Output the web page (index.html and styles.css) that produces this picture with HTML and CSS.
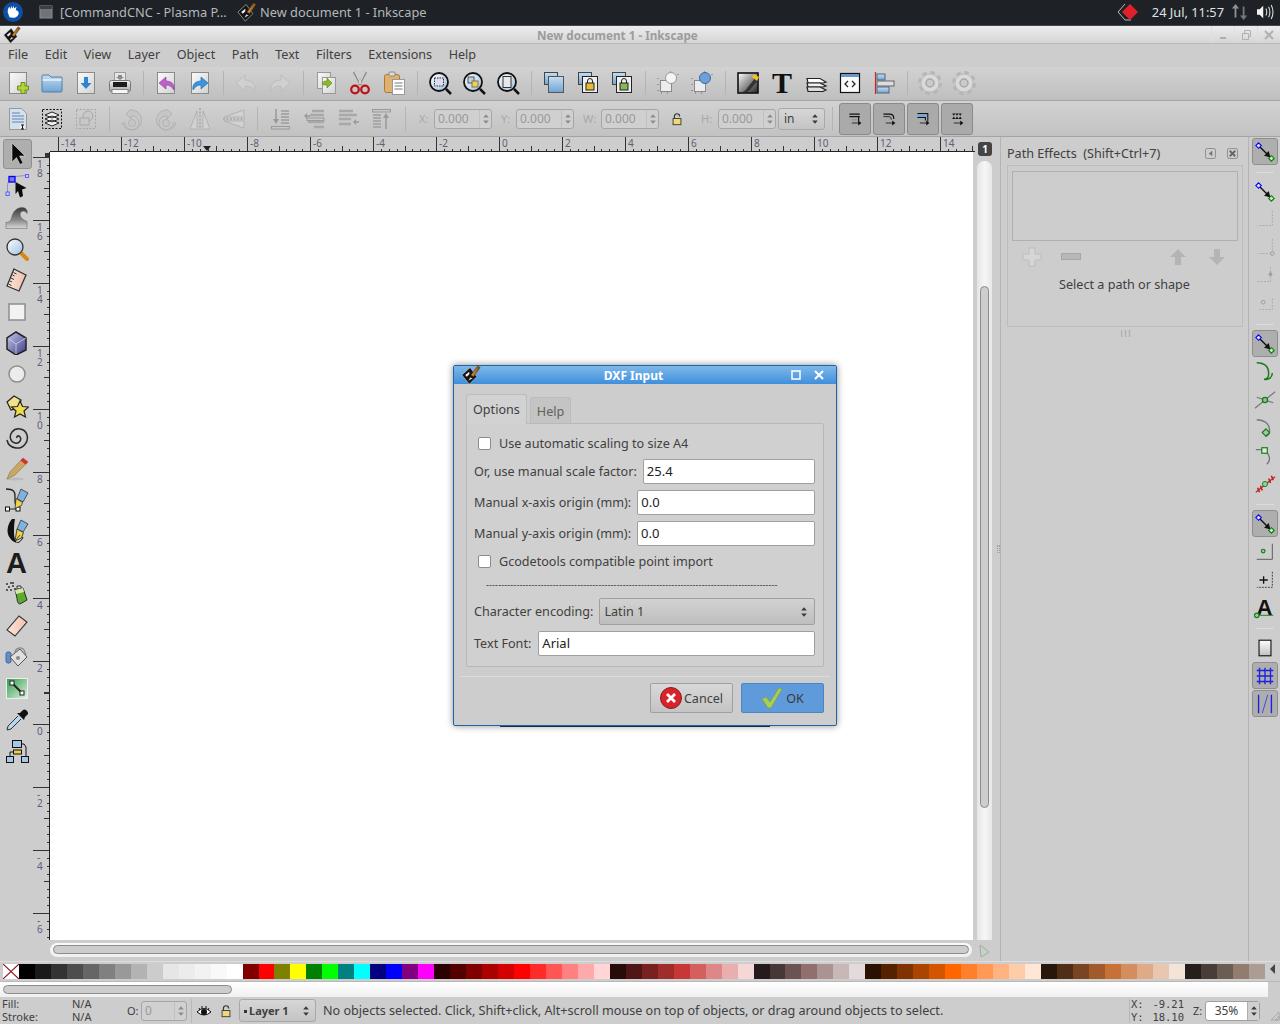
FILE: index.html
```html
<!DOCTYPE html>
<html lang="en">
<head>
<meta charset="utf-8">
<title>New document 1 - Inkscape</title>
<link rel="stylesheet" href="styles.css">
</head>
<body>
<svg class="sprite" aria-hidden="true">
<defs>
<linearGradient id="pg" x1="0" y1="0" x2="1" y2="1"><stop offset="0" stop-color="#fafafa"/><stop offset="1" stop-color="#d2d2d2"/></linearGradient>
<linearGradient id="blue" x1="0" y1="0" x2="0" y2="1"><stop offset="0" stop-color="#c6def2"/><stop offset="1" stop-color="#6ea4d4"/></linearGradient>
<linearGradient id="lens" x1="0" y1="0" x2="1" y2="1"><stop offset="0" stop-color="#ffffff"/><stop offset="1" stop-color="#9cbfe0"/></linearGradient>
<linearGradient id="gry" x1="0" y1="0" x2="0" y2="1"><stop offset="0" stop-color="#f0f0f0"/><stop offset="1" stop-color="#a8a8a8"/></linearGradient>
<linearGradient id="purp" x1="0" y1="0" x2="1" y2="1"><stop offset="0" stop-color="#c8c8ea"/><stop offset="1" stop-color="#3c3c88"/></linearGradient>
<linearGradient id="grn" x1="0" y1="0" x2="1" y2="1"><stop offset="0" stop-color="#2e9c4a"/><stop offset="1" stop-color="#e2f2e2"/></linearGradient>
<linearGradient id="wave" x1="0" y1="0" x2="0" y2="1"><stop offset="0" stop-color="#3c3c3c"/><stop offset=".6" stop-color="#8a8a8a"/><stop offset="1" stop-color="#d8d8d8"/></linearGradient>
<linearGradient id="peach" x1="0" y1="0" x2="1" y2="0"><stop offset="0" stop-color="#fbe6dc"/><stop offset="1" stop-color="#f2c0aa"/></linearGradient>
<linearGradient id="titleb" x1="0" y1="0" x2="1" y2="1"><stop offset="0" stop-color="#ffffff"/><stop offset="1" stop-color="#222"/></linearGradient>
<linearGradient id="pgw" x1="0" y1="0" x2="0" y2="1"><stop offset="0" stop-color="#ffffff"/><stop offset="1" stop-color="#c0c0c0"/></linearGradient>
<linearGradient id="inkp" x1="0" y1="0" x2="1" y2="0"><stop offset="0" stop-color="#e09030"/><stop offset="1" stop-color="#7a4a18"/></linearGradient>
</defs>
<symbol id="ink" viewBox="0 0 24 24"><path d="M11 3 L1 12 L10 23 L19 14 Z" fill="#141414" stroke="#d8d8d8" stroke-width=".7" stroke-linejoin="round"/><path d="M5 12 L10 8 L10 11 L7 14 Z" fill="#f2f2f2"/><path d="M9 19 L11 15 L14 16 Z" fill="#d8d8d8"/><path d="M12 12 L20 1 L23 3 L15 14 Z" fill="url(#inkp)" stroke="#3a2a10" stroke-width=".5"/></symbol>
<symbol id="new" viewBox="0 0 24 24"><rect x="3.5" y="1.5" width="17" height="21" fill="url(#pg)" stroke="#8a8a8a"/><path d="M15 11.5h4v3.500h3.500v4h-3.500v3.500h-4v-3.500h-3.500v-4h3.500z" fill="#b4d435" stroke="#6d8c20"/></symbol>
<symbol id="open" viewBox="0 0 24 24"><path d="M2 5 a1 1 0 0 1 1-1 h6 l2 2 h10 a1 1 0 0 1 1 1 v13 a1 1 0 0 1 -1 1 h-18 a1 1 0 0 1 -1-1z" fill="url(#blue)" stroke="#4d7fab"/><path d="M2.500 9 h19" stroke="#e8f2fa" stroke-width="1.500"/></symbol>
<symbol id="save" viewBox="0 0 24 24"><rect x="3.500" y="1.500" width="17" height="21" fill="url(#pg)" stroke="#8a8a8a"/><path d="M10 6h4v6h3.500l-5.500 6-5.500-6h3.500z" fill="#2f83d3"/></symbol>
<symbol id="print" viewBox="0 0 24 24"><path d="M6.500 1.500h11v8h-11z" fill="#e6e6e6" stroke="#9a9a9a"/><path d="M10 4h4v2h2l-4 3-4-3h2z" fill="#888"/><rect x="1.500" y="9.500" width="21" height="11" rx="2" fill="url(#gry)" stroke="#777"/><rect x="5" y="11" width="14" height="5" fill="#1c1c1c"/><rect x="4" y="18.500" width="16" height="4" fill="#f6f6f6" stroke="#888"/></symbol>
<symbol id="import" viewBox="0 0 24 24"><rect x="3.500" y="1.500" width="17" height="21" fill="url(#pg)" stroke="#8a8a8a"/><path d="M20 19c1-6-3-9-8-9v-4l-7 6 7 6v-4c4 0 6 2 8 5z" fill="#c060c8" stroke="#803a90" stroke-width=".6"/></symbol>
<symbol id="export" viewBox="0 0 24 24"><rect x="3.500" y="1.500" width="17" height="21" fill="url(#pg)" stroke="#8a8a8a"/><path d="M5 19c-1-6 3-9 8-9v-4l7 6-7 6v-4c-4 0-6 2-8 5z" fill="#3a95e0" stroke="#1f66a8" stroke-width=".6"/></symbol>
<symbol id="undo" viewBox="0 0 24 24"><path d="M21 20c1-7-4-11-10-11v-5l-9 8 9 8v-5c4 0 8 1 10 5z" fill="#d0d0d0" stroke="#bcbcbc"/></symbol>
<symbol id="redo" viewBox="0 0 24 24"><path d="M3 20c-1-7 4-11 10-11v-5l9 8-9 8v-5c-4 0-8 1-10 5z" fill="#d0d0d0" stroke="#bcbcbc"/></symbol>
<symbol id="dup" viewBox="0 0 24 24"><rect x="3.500" y="1.500" width="13" height="16" fill="url(#pg)" stroke="#999"/><rect x="8.500" y="6.500" width="13" height="16" fill="url(#pg)" stroke="#999"/><path d="M8 13c0-2 2-3 5-3v-3l5 5-5 5v-3c-2 0-4 0-5-1z" fill="#8cb82c" stroke="#5c8020" stroke-width=".6"/></symbol>
<symbol id="cut" viewBox="0 0 24 24"><path d="M6 1l7 13M18 1l-7 13" stroke="#8d8d8d" stroke-width="2.500" fill="none"/><path d="M7 1l6 12M17 1l-6 12" stroke="#e4e4e4" stroke-width="1" fill="none"/><circle cx="7" cy="18.500" r="3.800" fill="none" stroke="#c00f16" stroke-width="2.200"/><circle cx="17" cy="18.500" r="3.800" fill="none" stroke="#c00f16" stroke-width="2.200"/></symbol>
<symbol id="paste" viewBox="0 0 24 24"><rect x="2.500" y="3.500" width="15" height="18" rx="2" fill="#e0b070" stroke="#a87a3a"/><rect x="7" y="1" width="6" height="4" rx="1" fill="#ddd" stroke="#888"/><rect x="10.500" y="8.500" width="12" height="15" fill="#fff" stroke="#999"/><path d="M12.500 12h8M12.500 15h8M12.500 18h8" stroke="#777"/></symbol>
<symbol id="zdraw" viewBox="0 0 24 24"><circle cx="11" cy="11" r="9" fill="url(#lens)" stroke="#111" stroke-width="1.800"/><path d="M18 18l5 5" stroke="#111" stroke-width="2.500"/><rect x="6.500" y="7" width="9" height="8" fill="#dde" stroke="#333" stroke-dasharray="1.500 1"/></symbol>
<symbol id="zsel" viewBox="0 0 24 24"><circle cx="11" cy="11" r="9" fill="url(#lens)" stroke="#111" stroke-width="1.800"/><path d="M18 18l5 5" stroke="#111" stroke-width="2.500"/><rect x="6" y="6" width="6" height="6" fill="#b8d4ec" stroke="#555"/><rect x="10" y="10" width="6" height="6" fill="#f4d050" stroke="#775"/></symbol>
<symbol id="zpage" viewBox="0 0 24 24"><circle cx="11" cy="11" r="9" fill="url(#lens)" stroke="#111" stroke-width="1.800"/><path d="M18 18l5 5" stroke="#111" stroke-width="2.500"/><rect x="7" y="5.500" width="8" height="11" fill="#e8e8e8" stroke="#333"/></symbol>
<symbol id="cl1" viewBox="0 0 24 24"><rect x="2.500" y="1.500" width="13" height="12" fill="url(#blue)" stroke="#444"/><rect x="6.500" y="5.500" width="15" height="16" fill="url(#blue)" stroke="#555"/></symbol>
<symbol id="cl2" viewBox="0 0 24 24"><rect x="2.500" y="1.500" width="13" height="12" fill="url(#blue)" stroke="#444"/><rect x="6.500" y="5.500" width="15" height="16" fill="#eee" stroke="#222"/><rect x="10" y="12" width="8" height="7" fill="#e8bc30" stroke="#222"/><path d="M11.500 12v-2a2.500 2.500 0 0 1 5 0v2" fill="none" stroke="#222"/></symbol>
<symbol id="cl3" viewBox="0 0 24 24"><rect x="2.500" y="1.500" width="13" height="12" fill="url(#blue)" stroke="#444"/><rect x="6.500" y="5.500" width="15" height="16" fill="#eee" stroke="#222"/><rect x="10" y="12" width="8" height="7" fill="#86b85a" stroke="#222"/><path d="M11.500 12v-2a2.500 2.500 0 0 1 5 0v2" fill="none" stroke="#222"/></symbol>
<symbol id="grp" viewBox="0 0 24 24"><path d="M2 7v15h15M22 3v6M14 1h6" fill="none" stroke="#666" stroke-dasharray="1 5"/><rect x="4.500" y="9.500" width="11" height="11" fill="#ececec" stroke="#888"/><circle cx="15" cy="7" r="5.500" fill="#f4f4f4" stroke="#999"/></symbol>
<symbol id="ungrp" viewBox="0 0 24 24"><path d="M2 7v15h15M22 3v6M14 1h6" fill="none" stroke="#666" stroke-dasharray="1 5"/><rect x="4.500" y="9.500" width="11" height="11" fill="#ececec" stroke="#888"/><circle cx="15" cy="7" r="5.500" fill="#6f9fd8" stroke="#3a6ca8"/></symbol>
<symbol id="fill" viewBox="0 0 24 24"><rect x="2" y="2" width="20" height="20" fill="url(#titleb)" stroke="#111" stroke-width="1.600"/><path d="M5 21c3 0 5-2 7-5l8-10 3 2-9 11c-2 2-6 3-9 2z" fill="#333"/><path d="M18 3l5 3-2 4-5-4z" fill="#f2c020"/></symbol>
<symbol id="layers" viewBox="0 0 24 24"><path d="M3 7.500h13l6 3.500-3 1H4z" fill="#fff" stroke="#222" stroke-width="1.200"/><path d="M3 12h13l6 3-3 1H4z" fill="#eee" stroke="#222" stroke-width="1.200"/><path d="M3 16h13l6 3-3 1.500H4z" fill="#ddd" stroke="#222" stroke-width="1.200"/></symbol>
<symbol id="xml" viewBox="0 0 24 24"><rect x="2.500" y="2.500" width="19" height="19" fill="#fafafa" stroke="#111" stroke-width="1.200"/><rect x="3" y="3" width="18" height="3" fill="#6a96c8"/><path d="M10 10l-3 3 3 3M14 10l3 3-3 3" fill="none" stroke="#222" stroke-width="1.300"/></symbol>
<symbol id="align" viewBox="0 0 24 24"><path d="M3.500 1v22" stroke="#c0282c" stroke-width="1.200"/><rect x="5" y="3" width="8" height="6" fill="url(#blue)" stroke="#567"/><rect x="5" y="10" width="17" height="5" fill="#ddd" stroke="#666"/><rect x="5" y="16" width="12" height="6" fill="url(#blue)" stroke="#567"/></symbol>
<symbol id="gear" viewBox="0 0 24 24"><circle cx="12" cy="12" r="10.200" fill="none" stroke="#b6b6b6" stroke-width="3.400" stroke-dasharray="4.500 3.500"/><circle cx="12" cy="12" r="9" fill="#dadada" stroke="#bcbcbc"/><circle cx="12" cy="12" r="4" fill="#cacaca" stroke="#a8a8a8" stroke-width="1.500"/></symbol>
<symbol id="props" viewBox="0 0 24 24"><path d="M3.500 1.500h12l5 5v16h-17z" fill="#d3e1ef" stroke="#999"/><path d="M6 6h8M6 9h12M6 12h12M6 15h12" stroke="#5e84ad"/><path d="M14 17h5v5h-5z" fill="#eee"/><path d="M15 18h3M16.500 18v4M15 22h3" stroke="#111"/></symbol>
<symbol id="selall" viewBox="0 0 24 24"><rect x="2.500" y="2.500" width="19" height="19" fill="none" stroke="#111" stroke-dasharray="2 1.500"/><path d="M5 8l7-3 7 3-7 3z M5 12l7-3 7 3-7 3z M5 16l7-3 7 3-7 3z" fill="#f4f4f4" stroke="#222"/></symbol>
<symbol id="seldim" viewBox="0 0 24 24"><rect x="2.500" y="2.500" width="19" height="19" fill="none" stroke="#a6a6a6" stroke-dasharray="2 1.500"/><circle cx="14" cy="9" r="5" fill="#c8c8c8" stroke="#a8a8a8"/><rect x="6" y="11" width="9" height="7" fill="#c8c8c8" stroke="#a8a8a8"/></symbol>
<symbol id="rotl" viewBox="0 0 24 24"><path d="M11 2l-5 5 5 5v-3a7 7 0 1 1-6 7h-3a10 10 0 1 0 9-13z" fill="#c6c6c6" stroke="#b2b2b2"/><circle cx="12" cy="16" r="3.500" fill="#c6c6c6" stroke="#b2b2b2"/></symbol>
<symbol id="rotr" viewBox="0 0 24 24"><path d="M13 2l5 5-5 5v-3a7 7 0 1 0 6 7h3a10 10 0 1 1-9-13z" fill="#c6c6c6" stroke="#b2b2b2"/><circle cx="12" cy="16" r="3.500" fill="#c6c6c6" stroke="#b2b2b2"/></symbol>
<symbol id="fliph" viewBox="0 0 24 24"><path d="M9 4L2 22h7zM15 4l7 18h-7z" fill="#d2d2d2" stroke="#b2b2b2"/><path d="M12 1v22" stroke="#b0b0b0" stroke-width="2" stroke-dasharray="2 1.500"/></symbol>
<symbol id="flipv" viewBox="0 0 24 24"><path d="M22 3L2 10h20zM22 21L2 14h20z" fill="#d2d2d2" stroke="#b2b2b2"/><path d="M1 12h22" stroke="#b0b0b0" stroke-width="2" stroke-dasharray="2 1.500"/></symbol>
<symbol id="lower" viewBox="0 0 24 24"><path d="M8 2v13" stroke="#999" stroke-width="1.500"/><path d="M5 12l3 5 3-5z" fill="#999"/><path d="M13 4h8M13 7h8M13 10h8M13 13h8M13 16h8" stroke="#a8a8a8" stroke-width="2"/><rect x="3.500" y="19.500" width="18" height="2.500" fill="#c8c8c8" stroke="#9a9a9a"/></symbol>
<symbol id="down" viewBox="0 0 24 24"><path d="M3 9h5" stroke="#999" stroke-width="1.500"/><path d="M5 6l-3 3 3 3z" fill="#999"/><path d="M10 4h12M8 8h14M6 15h16M12 20h10" stroke="#a8a8a8" stroke-width="2.500"/><rect x="5" y="11" width="17" height="2.500" fill="#c8c8c8" stroke="#9a9a9a"/></symbol>
<symbol id="up" viewBox="0 0 24 24"><path d="M3 4h14M3 8h18M3 12h12M3 17h12" stroke="#a8a8a8" stroke-width="2.500"/><path d="M18 15h5" stroke="#999" stroke-width="1.500"/><path d="M20 12l-3 3 3 3z" fill="#999"/></symbol>
<symbol id="raise" viewBox="0 0 24 24"><rect x="2.500" y="2.500" width="18" height="2.500" fill="#c8c8c8" stroke="#9a9a9a"/><path d="M3 8h8M3 11h8M3 14h8M3 17h8M3 20h8" stroke="#a8a8a8" stroke-width="2"/><path d="M16 22v-13" stroke="#999" stroke-width="1.500"/><path d="M13 11l3-5 3 5z" fill="#999"/></symbol>
<symbol id="lock" viewBox="0 0 16 16"><path d="M5 8V5a3 3 0 0 1 6 0" fill="none" stroke="#333" stroke-width="1.300"/><rect x="3.500" y="7.500" width="9" height="7" fill="#f0d878" stroke="#333"/></symbol>
<symbol id="ud" viewBox="0 0 10 16"><path d="M5 2l3.500 4h-7z M5 14L1.500 10h7z" fill="#3a3a3a"/></symbol>
<symbol id="mode1" viewBox="0 0 20 20"><path d="M3 4h13M3 7h13" stroke="#111" stroke-width="1.500"/><path d="M14.500 7v6" stroke="#111" stroke-width="1.500"/><path d="M6 15h9" stroke="#111"/><path d="M14 12l4 3-4 3z" fill="#111"/><path d="M6 11h8" stroke="#666" stroke-dasharray="1 1"/></symbol>
<symbol id="mode2" viewBox="0 0 20 20"><path d="M3 4h8q5 0 5 6" fill="none" stroke="#111" stroke-width="1.500"/><path d="M3 7h7q3 0 3 4" fill="none" stroke="#111"/><path d="M6 15h9" stroke="#111"/><path d="M14 12l4 3-4 3z" fill="#111"/></symbol>
<symbol id="mode3" viewBox="0 0 20 20"><rect x="3" y="3" width="13" height="5" fill="#7ca5d0"/><path d="M3 3h13v10M3 8h10v4" fill="none" stroke="#111" stroke-width="1.300"/><path d="M6 15h9" stroke="#111"/><path d="M14 12l4 3-4 3z" fill="#111"/></symbol>
<symbol id="mode4" viewBox="0 0 20 20"><path d="M4 3l2 3 2-3 2 3 2-3 2 3 2-3z M4 10l2-3 2 3 2-3 2 3 2-3 2 3z" fill="#111"/><path d="M6 15h9" stroke="#111"/><path d="M14 12l4 3-4 3z" fill="#111"/></symbol>
<symbol id="t-sel" viewBox="0 0 24 24"><path d="M6 1v19l4.500-4.500 3.500 7 3-1.500-3.500-7H19z" fill="#0a0a0a" stroke="#eee" stroke-width=".5"/></symbol>
<symbol id="t-node" viewBox="0 0 24 24"><path d="M2.500 18v-6c0-5 4-9 8-9.500l10-1" fill="none" stroke="#8a8ab8" stroke-width=".9"/><rect x="4" y="2.500" width="6" height="5.500" fill="#7a7ad8" stroke="#0000ff" stroke-width="1.300"/><rect x="20.500" y="0.500" width="3" height="3" fill="#ccf" stroke="#55f" stroke-width=".9"/><rect x="1" y="18" width="3.200" height="3.500" fill="#ccf" stroke="#55f" stroke-width=".9"/><path d="M10.500 8l11 6-4.500 1.500 1 6.500-3 1.500-2-6.500-2.500 3z" fill="#0a0a0a"/></symbol>
<symbol id="t-tweak" viewBox="0 0 24 24"><path d="M1 23.500v-6c3 0 5-1.500 6-6 1-5 5-9 10-9 4 0 6 3 5 6-1-2-3-3-5-2-3 1-2 5 0 7 1.500 1.500 3 2 5 3v7z" fill="url(#wave)" stroke="#444" stroke-width=".4"/></symbol>
<symbol id="t-zoom" viewBox="0 0 24 24"><path d="M15 15l7 7" stroke="#d88a10" stroke-width="4" stroke-linecap="round"/><circle cx="10" cy="10" r="8" fill="url(#lens)" stroke="#333" stroke-width="1.300"/></symbol>
<symbol id="t-meas" viewBox="0 0 24 24"><path d="M9 1L21 7 14 23 2 18z" fill="url(#peach)" stroke="#333" stroke-width="1.300"/><path d="M8.500 4.500l3 1.500M7.500 7l2 1M6 10l3 1.500M5 13l2 1M3.500 16l3 1.500" stroke="#333"/></symbol>
<symbol id="t-rect" viewBox="0 0 24 24"><rect x="4" y="4" width="16" height="16" fill="#f2f2f2" stroke="#8e8e8e" stroke-width="1.500"/></symbol>
<symbol id="t-3d" viewBox="0 0 24 24"><path d="M11 1l10 6v12l-10 5L2 18V7z" fill="url(#purp)" stroke="#222" stroke-width="1.500"/><path d="M11 13l10-6M11 13L4 8M11 13v10" stroke="#e8e8ff" stroke-width=".6"/></symbol>
<symbol id="t-circ" viewBox="0 0 24 24"><circle cx="12" cy="12" r="8" fill="#ececec" stroke="#8e8e8e" stroke-width="1.500"/></symbol>
<symbol id="t-star" viewBox="0 0 24 24"><path d="M2 8l7-6 7 4-2 8-8 2z" fill="#f0e090" stroke="#222" stroke-width="1.200"/><path d="M15 7l2.500 5.500 6 .5-4.500 4 1.500 6L15 20l-5.500 3 1.500-6-4.500-4 6-.5z" fill="#f0dc50" stroke="#222" stroke-width="1.200"/></symbol>
<symbol id="t-spiral" viewBox="0 0 24 24"><path d="M12 13c-1-2 2-3 3-1 2 3-1 7-5 6-5-1-6-7-3-11 4-5 13-4 15 3 2 7-4 14-11 13-4-.5-8-3-9-8" fill="none" stroke="#2a2a2a" stroke-width="1.500"/></symbol>
<symbol id="t-pencil" viewBox="0 0 24 24"><ellipse cx="10" cy="22" rx="9" ry="1.500" fill="#bbb"/><path d="M2 22l3-7L18 1l5 4-13 13z" fill="#c9a864" stroke="#8a7040" stroke-width=".6"/><path d="M18 1l5 4-2.500 2.500-5-4z" fill="#d43030"/></symbol>
<symbol id="t-pen" viewBox="0 0 24 24"><path d="M1 1c8 0 9 3 9 7 0 4-1 10 4 12" fill="none" stroke="#222" stroke-width="1.300"/><path d="M4 21h8" stroke="#222"/><rect x="0.500" y="19" width="4" height="4" fill="#fff" stroke="#111"/><rect x="11" y="19" width="4" height="4" fill="#fff" stroke="#111"/><path d="M16 1l7 4-5 9-6-3.500z" fill="#7fb2dc" stroke="#222" stroke-width=".7"/><path d="M11 10.500l6.500 4-1 3-6.500 3z" fill="#efd04a" stroke="#222" stroke-width=".7"/></symbol>
<symbol id="t-calli" viewBox="0 0 24 24"><path d="M7 0C2 6 1 14 5 19c2 3 4 4 7 5-2-3-3-6-3-10 0-5 0-9 1-14z" fill="#111"/><path d="M12 24c3-1 5-3 6-6" fill="none" stroke="#111"/><path d="M16 1l7 4-5 8-6-3z" fill="#7fb2dc" stroke="#222" stroke-width=".7"/><path d="M12 10l6.500 3.500-2 5.500-6.500 3z" fill="#efd04a" stroke="#222" stroke-width=".8"/><path d="M11 21l4-5" stroke="#222" stroke-width=".8"/></symbol>
<symbol id="t-spray" viewBox="0 0 24 24"><path d="M12 4h4v3h-4z" fill="#ddd" stroke="#333"/><path d="M10 8l8-2 4 12-7 4c-2 0-3-3-3-6z" fill="#5dab2e" stroke="#2a2a2a"/><path d="M10 8l8-2 1 4-8 2z" fill="#d4e8a8"/><path d="M1 2h2M5 1h2M3 5h2M7 4h2M1 8h2M5 8h2M9 7h2M7 1h2" stroke="#333" stroke-width="1.400"/></symbol>
<symbol id="t-erase" viewBox="0 0 24 24"><path d="M14 2l8 6L10 22 2 16z" fill="url(#peach)" stroke="#333" stroke-width="1.100"/></symbol>
<symbol id="t-bucket" viewBox="0 0 24 24"><rect x="1" y="7" width="5" height="11" rx="2" fill="#5f8fc8" stroke="#44689a"/><path d="M5 12l10-8 7 8-9 9z" fill="#e0e0e0" stroke="#555"/><path d="M10 8c0-5 7-7 9-3l2 5" fill="none" stroke="#888" stroke-width="1.300"/><circle cx="13" cy="13" r="2" fill="#888"/></symbol>
<symbol id="t-grad" viewBox="0 0 24 24"><rect x="1.500" y="2.500" width="21" height="20" fill="url(#grn)" stroke="#eee"/><path d="M7 7l10 10" stroke="#222" stroke-width="2"/><rect x="5" y="5" width="4" height="4" fill="#fff" stroke="#222"/><rect x="15" y="15" width="4" height="4" fill="#fff" stroke="#222"/></symbol>
<symbol id="t-drop" viewBox="0 0 24 24"><path d="M13 8L3 18l-1 4 4-1L16 11" fill="#b4d8ef" stroke="#333"/><path d="M12 5l7 7 1-3 3-3c1-2-3-6-5-4l-3 3z" fill="#111"/></symbol>
<symbol id="t-conn" viewBox="0 0 24 24"><rect x="7.500" y="1.500" width="9" height="7" fill="#a6c7e8" stroke="#111"/><rect x="1.500" y="17.500" width="7" height="6" fill="#a6c7e8" stroke="#111"/><rect x="16.500" y="17.500" width="7" height="6" fill="#a6c7e8" stroke="#111"/><rect x="8.500" y="11" width="8" height="4" fill="#f4d040" stroke="#111"/><path d="M5 17v-4h3M16 5h3l2 3v9" fill="none" stroke="#111"/></symbol>
<symbol id="s-node" viewBox="0 0 24 24"><path d="M6 6l9 9" stroke="#111" stroke-width="1.500"/><path d="M18 18l-7-2 5-5z" fill="#111"/><path d="M5 2l3 3-3 3-3-3z" fill="#dde4ff" stroke="#0000ff" stroke-width="1.200"/><path d="M19 16l3 3-3 3-3-3z" fill="#cde8cd" stroke="#008000" stroke-width="1.200"/></symbol>
<symbol id="s-bbox" viewBox="0 0 24 24"><path d="M20 2v16H4" fill="none" stroke="#a6a6a6" stroke-dasharray="2 1.500"/></symbol>
<symbol id="s-mid" viewBox="0 0 24 24"><path d="M20 2v16H4" fill="none" stroke="#a6a6a6" stroke-dasharray="2 1.500"/><circle cx="20" cy="18" r="2" fill="#ccc" stroke="#999"/></symbol>
<symbol id="s-mid2" viewBox="0 0 24 24"><path d="M18 2v16H4" fill="none" stroke="#a6a6a6" stroke-dasharray="2 1.500"/><circle cx="18" cy="10" r="2" fill="#a0a0a0"/></symbol>
<symbol id="s-ctr" viewBox="0 0 24 24"><path d="M20 6v12H6" fill="none" stroke="#a6a6a6" stroke-dasharray="2 1.500"/><circle cx="10" cy="10" r="2" fill="none" stroke="#999"/></symbol>
<symbol id="s-curve" viewBox="0 0 24 24"><path d="M3 2c8 0 13 4 13 12 0 4-2 6-5 6 5 1 9-2 9-7" fill="none" stroke="#1a7a1a" stroke-width="1.600"/></symbol>
<symbol id="s-cross" viewBox="0 0 24 24"><path d="M1 21L23 3M3 9l18 6" stroke="#777" stroke-width="1.300"/><circle cx="12" cy="12" r="2.800" fill="#8cc48c" stroke="#1a7a1a" stroke-width="1.400"/></symbol>
<symbol id="s-smooth" viewBox="0 0 24 24"><path d="M3 3c8 0 14 4 14 12 0 3-1 5-4 6" fill="none" stroke="#777" stroke-width="1.500"/><path d="M13 13l4 4-4 4-4-4z" fill="#9ccc9c" stroke="#1a7a1a" stroke-width="1.300"/></symbol>
<symbol id="s-cusp" viewBox="0 0 24 24"><path d="M2 5h9M11 7c6 2 8 9 3 14" fill="none" stroke="#777" stroke-width="1.500"/><rect x="8.500" y="3" width="6" height="6" fill="#ded" stroke="#1a7a1a" stroke-width="1.300"/></symbol>
<symbol id="s-tan" viewBox="0 0 24 24"><path d="M2 21L23 4" stroke="#b03030" stroke-width="1.400"/><path d="M4 16l2 5M7 14l2 5M16 6l2 5M19 3l2 5" stroke="#c01818" stroke-width="1.600"/><circle cx="12" cy="12" r="2.800" fill="#9ccc9c" stroke="#1a7a1a"/></symbol>
<symbol id="s-other" viewBox="0 0 24 24"><path d="M20 3v17H3" fill="none" stroke="#555"/><circle cx="10" cy="11" r="2" fill="#9ccc9c" stroke="#1a7a1a" stroke-width="1.300"/></symbol>
<symbol id="s-guide" viewBox="0 0 24 24"><path d="M20 3v17H3" fill="none" stroke="#333" stroke-dasharray="2 1.300"/><path d="M6 12h9M10.500 8v8" stroke="#111" stroke-width="1.400"/></symbol>
<symbol id="s-text" viewBox="0 0 24 24"><path d="M3 20h18" stroke="#1a7a1a"/><circle cx="3" cy="20" r="2.500" fill="#9ccc9c" stroke="#1a7a1a" stroke-width="1.300"/></symbol>
<symbol id="s-page" viewBox="0 0 24 24"><rect x="5.500" y="3.500" width="13" height="17" fill="url(#pgw)" stroke="#111" stroke-width="1.200"/></symbol>
<symbol id="s-grid" viewBox="0 0 24 24"><path d="M6 3v18M12 3v18M18 3v18M3 6h18M3 12h18M3 18h18" stroke="#2020e0" stroke-width="1.500"/></symbol>
<symbol id="s-lines" viewBox="0 0 24 24"><path d="M5 2v20M19 2v20" stroke="#2020e0" stroke-width="1.500"/><path d="M9 22L15 2" stroke="#4040e0"/></symbol>
</svg>

<header class="panel">
  <div class="kde"><svg class="kde-ic" viewBox="0 0 18 18"><path d="M3 9c0-3 1-5 2-6l1 3 1-4 1 3 2-3 0 3 3-2-1 4c3 0 4 3 3 5-2 4-7 4-10 3z" fill="#fff"/></svg></div>
  <svg class="win-ic" viewBox="0 0 14 14"><rect x="1" y="1" width="12" height="12" fill="#6f747a" stroke="#8a8f95"/><rect x="1" y="1" width="12" height="3" fill="#3d4045"/></svg>
  <span class="task first">[CommandCNC - Plasma P...</span>
  <svg class="ic20"><use href="#ink"/></svg>
  <span class="task">New document 1 - Inkscape</span>
  <span class="grow"></span>
  <svg class="diamond" viewBox="0 0 24 18"><path d="M9 1L2 9l7 8h6" fill="none" stroke="#bbb"/><path d="M14 1l8 8-8 8-8-8z" fill="#e2202a"/></svg>
  <span class="clock">24 Jul, 11:57</span>
  <svg class="net" viewBox="0 0 20 20"><path d="M5 1l4 5H6v10H4V6H1z" fill="#8e9296"/><path d="M14 19l-4-5h3V4h2v10h3z" fill="#74787c"/></svg>
  <svg class="vol" viewBox="0 0 20 18"><path d="M1 6h3l4-4v14l-4-4H1z" fill="#f2f2f2"/><path d="M11 5q2 4 0 8M14 3q3 6 0 12M17 1q4 8 0 16" fill="none" stroke="#dcdcdc" stroke-width="1.200"/></svg>
</header>

<div class="titlebar">
  <svg class="ic18"><use href="#ink"/></svg>
  <span class="wintitle">New document 1 - Inkscape</span>
  <div class="wbtn"><svg viewBox="0 0 12 12"><rect x="3" y="8" width="6" height="2" fill="#b0b0b0"/></svg></div>
  <div class="wbtn"><svg viewBox="0 0 12 12"><path d="M2.500 4.500h6v6h-6zM4.500 4V1.500h6v6H9" fill="none" stroke="#b0b0b0"/></svg></div>
  <div class="wbtn"><svg viewBox="0 0 12 12"><path d="M2 2l8 8M10 2l-8 8" stroke="#b0b0b0" stroke-width="2"/></svg></div>
</div>

<nav class="menu"><span>File</span><span>Edit</span><span>View</span><span>Layer</span><span>Object</span><span>Path</span><span>Text</span><span>Filters</span><span>Extensions</span><span>Help</span></nav>

<div class="tb tb1">
  <span class="b"><svg class="ic"><use href="#new"/></svg></span>
  <span class="b"><svg class="ic"><use href="#open"/></svg></span>
  <span class="b"><svg class="ic"><use href="#save"/></svg></span>
  <span class="b"><svg class="ic"><use href="#print"/></svg></span>
  <i class="sep"></i>
  <span class="b"><svg class="ic"><use href="#import"/></svg></span>
  <span class="b"><svg class="ic"><use href="#export"/></svg></span>
  <i class="sep"></i>
  <span class="b"><svg class="ic"><use href="#undo"/></svg></span>
  <span class="b"><svg class="ic"><use href="#redo"/></svg></span>
  <i class="sep"></i>
  <span class="b"><svg class="ic"><use href="#dup"/></svg></span>
  <span class="b"><svg class="ic"><use href="#cut"/></svg></span>
  <span class="b"><svg class="ic"><use href="#paste"/></svg></span>
  <i class="sep"></i>
  <span class="b"><svg class="ic"><use href="#zdraw"/></svg></span>
  <span class="b"><svg class="ic"><use href="#zsel"/></svg></span>
  <span class="b"><svg class="ic"><use href="#zpage"/></svg></span>
  <i class="sep"></i>
  <span class="b"><svg class="ic"><use href="#cl1"/></svg></span>
  <span class="b"><svg class="ic"><use href="#cl2"/></svg></span>
  <span class="b"><svg class="ic"><use href="#cl3"/></svg></span>
  <i class="sep"></i>
  <span class="b"><svg class="ic"><use href="#grp"/></svg></span>
  <span class="b"><svg class="ic"><use href="#ungrp"/></svg></span>
  <i class="sep"></i>
  <span class="b"><svg class="ic"><use href="#fill"/></svg></span>
  <span class="b big-t">T</span>
  <span class="b"><svg class="ic"><use href="#layers"/></svg></span>
  <span class="b"><svg class="ic"><use href="#xml"/></svg></span>
  <span class="b"><svg class="ic"><use href="#align"/></svg></span>
  <i class="sep"></i>
  <span class="b"><svg class="ic"><use href="#gear"/></svg></span>
  <span class="b"><svg class="ic"><use href="#gear"/></svg></span>
</div>

<div class="tb tb2">
  <span class="b"><svg class="ic"><use href="#props"/></svg></span>
  <span class="b"><svg class="ic"><use href="#selall"/></svg></span>
  <span class="b"><svg class="ic"><use href="#seldim"/></svg></span>
  <i class="sep"></i>
  <span class="b"><svg class="ic"><use href="#rotl"/></svg></span>
  <span class="b"><svg class="ic"><use href="#rotr"/></svg></span>
  <span class="b"><svg class="ic"><use href="#fliph"/></svg></span>
  <span class="b"><svg class="ic"><use href="#flipv"/></svg></span>
  <i class="sep"></i>
  <span class="b"><svg class="ic"><use href="#lower"/></svg></span>
  <span class="b"><svg class="ic"><use href="#down"/></svg></span>
  <span class="b"><svg class="ic"><use href="#up"/></svg></span>
  <span class="b"><svg class="ic"><use href="#raise"/></svg></span>
  <i class="sep"></i>
  <span class="lab lab-x">X:</span><div class="spin"><span class="v">0.000</span><span class="st"><svg viewBox="0 0 10 16"><use href="#ud"/></svg></span></div>
  <span class="lab lab-y">Y:</span><div class="spin"><span class="v">0.000</span><span class="st"><svg viewBox="0 0 10 16"><use href="#ud"/></svg></span></div>
  <span class="lab lab-w">W:</span><div class="spin"><span class="v">0.000</span><span class="st"><svg viewBox="0 0 10 16"><use href="#ud"/></svg></span></div>
  <svg class="lk"><use href="#lock"/></svg>
  <span class="lab lab-h">H:</span><div class="spin"><span class="v">0.000</span><span class="st"><svg viewBox="0 0 10 16"><use href="#ud"/></svg></span></div>
  <div class="unit"><span>in</span><svg class="ud" viewBox="0 0 10 16"><use href="#ud"/></svg></div>
  <i class="sep sep2"></i>
  <div class="modes">
    <span class="mode"><svg class="mode-ic"><use href="#mode1"/></svg></span>
    <span class="mode"><svg class="mode-ic"><use href="#mode2"/></svg></span>
    <span class="mode"><svg class="mode-ic"><use href="#mode3"/></svg></span>
    <span class="mode"><svg class="mode-ic"><use href="#mode4"/></svg></span>
  </div>
</div>

<main class="main">
  <aside class="tools">
    <span class="tool on"><svg class="ic"><use href="#t-sel"/></svg></span>
    <span class="tool"><svg class="ic"><use href="#t-node"/></svg></span>
    <span class="tool"><svg class="ic"><use href="#t-tweak"/></svg></span>
    <span class="tool"><svg class="ic"><use href="#t-zoom"/></svg></span>
    <span class="tool"><svg class="ic"><use href="#t-meas"/></svg></span>
    <span class="tool"><svg class="ic"><use href="#t-rect"/></svg></span>
    <span class="tool"><svg class="ic"><use href="#t-3d"/></svg></span>
    <span class="tool"><svg class="ic"><use href="#t-circ"/></svg></span>
    <span class="tool"><svg class="ic"><use href="#t-star"/></svg></span>
    <span class="tool"><svg class="ic"><use href="#t-spiral"/></svg></span>
    <span class="tool"><svg class="ic"><use href="#t-pencil"/></svg></span>
    <span class="tool"><svg class="ic"><use href="#t-pen"/></svg></span>
    <span class="tool"><svg class="ic"><use href="#t-calli"/></svg></span>
    <span class="tool big-a">A</span>
    <span class="tool"><svg class="ic"><use href="#t-spray"/></svg></span>
    <span class="tool"><svg class="ic"><use href="#t-erase"/></svg></span>
    <span class="tool"><svg class="ic"><use href="#t-bucket"/></svg></span>
    <span class="tool"><svg class="ic"><use href="#t-grad"/></svg></span>
    <span class="tool"><svg class="ic"><use href="#t-drop"/></svg></span>
    <span class="tool"><svg class="ic"><use href="#t-conn"/></svg></span>
  </aside>

  <section class="desk">
    <div class="corner"></div>
    <div class="hruler">
      <span>-14</span><span>-12</span><span>-10</span><span>-8</span><span>-6</span><span>-4</span><span>-2</span><span>0</span><span>2</span><span>4</span><span>6</span><span>8</span><span>10</span><span>12</span><span>14</span>
      <i class="pointer"></i>
    </div>
    <div class="badge-cell"><span class="badge">1</span></div>
    <div class="vruler">
      <span>1<br>8</span><span>1<br>6</span><span>1<br>4</span><span>1<br>2</span><span>1<br>0</span><span>8</span><span>6</span><span>4</span><span>2</span><span>0</span><span>-<br>2</span><span>-<br>4</span><span>-<br>6</span>
    </div>
    <div class="canvas"></div>
    <div class="vscroll"><div class="vtrack"><div class="vthumb"></div></div></div>
    <div class="blank"></div>
    <div class="hscroll"><div class="htrack"><div class="hthumb"></div></div></div>
    <div class="sc-corner"><svg class="sc-ic" viewBox="0 0 12 14"><path d="M2 1l9 7-8 5z" fill="#c4d4c4" stroke="#a8a8a8"/></svg></div>
  </section>

  <section class="dock">
    <div class="dock-head"><span>Path Effects&nbsp; (Shift+Ctrl+7)</span><i class="grow"></i>
      <svg class="dk" viewBox="0 0 12 12"><rect x=".5" y=".5" width="11" height="11" rx="2" fill="none" stroke="#888"/><path d="M8 3v6L4 6z" fill="#777"/></svg>
      <svg class="dk" viewBox="0 0 12 12"><rect x=".5" y=".5" width="11" height="11" rx="2" fill="none" stroke="#888"/><path d="M3 3l6 6M9 3l-6 6" stroke="#666" stroke-width="2"/></svg>
    </div>
    <div class="fx">
      <div class="fx-list"></div>
      <div class="fx-btns">
        <svg class="fb plus" viewBox="0 0 20 20"><path d="M7 1h6v6h6v6h-6v6H7v-6H1V7h6z" fill="#d6d6d6" stroke="#bdbdbd"/></svg>
        <svg class="fb minus" viewBox="0 0 20 20"><rect x=".5" y="6.500" width="19" height="6" fill="#b8b8b8" stroke="#a6a6a6"/></svg>
        <i class="grow"></i>
        <svg class="fb up" viewBox="0 0 20 20"><path d="M10 2l8 8h-5v8H7v-8H2z" fill="#b4b4b4"/></svg>
        <svg class="fb dn" viewBox="0 0 20 20"><path d="M10 18L2 10h5V2h6v8h5z" fill="#b4b4b4"/></svg>
      </div>
      <p class="fx-msg">Select a path or shape</p>
    </div>
    <div class="fx-handle">|||</div>
    <div class="dock-grip"></div>
  </section>

  <aside class="snap">
    <span class="sn on"><svg class="ic"><use href="#s-node"/></svg></span><i class="snsep"></i>
    <span class="sn"><svg class="ic"><use href="#s-node"/></svg></span>
    <span class="sn"><svg class="ic"><use href="#s-bbox"/></svg></span>
    <span class="sn"><svg class="ic"><use href="#s-mid"/></svg></span>
    <span class="sn"><svg class="ic"><use href="#s-mid2"/></svg></span>
    <span class="sn"><svg class="ic"><use href="#s-ctr"/></svg></span><i class="snsep"></i>
    <span class="sn on"><svg class="ic"><use href="#s-node"/></svg></span>
    <span class="sn"><svg class="ic"><use href="#s-curve"/></svg></span>
    <span class="sn"><svg class="ic"><use href="#s-cross"/></svg></span>
    <span class="sn"><svg class="ic"><use href="#s-smooth"/></svg></span>
    <span class="sn"><svg class="ic"><use href="#s-cusp"/></svg></span>
    <span class="sn"><svg class="ic"><use href="#s-tan"/></svg></span><i class="snsep"></i>
    <span class="sn on"><svg class="ic"><use href="#s-node"/></svg></span>
    <span class="sn"><svg class="ic"><use href="#s-other"/></svg></span>
    <span class="sn"><svg class="ic"><use href="#s-guide"/></svg></span>
    <span class="sn snap-a">A<svg class="ic snap-mark"><use href="#s-text"/></svg></span><i class="snsep"></i>
    <span class="sn"><svg class="ic"><use href="#s-page"/></svg></span>
    <span class="sn on"><svg class="ic"><use href="#s-grid"/></svg></span>
    <span class="sn on"><svg class="ic"><use href="#s-lines"/></svg></span>
  </aside>
</main>

<div class="palette">
  <span class="none"><svg viewBox="0 0 16 16" preserveAspectRatio="none"><rect width="16" height="16" fill="#fff"/><path d="M0 0l16 16M16 0L0 16" stroke="#8a1a1a" stroke-width="1.200"/></svg></span>
  <b style="background:#000"></b><b style="background:#1a1a1a"></b><b style="background:#333"></b><b style="background:#4d4d4d"></b><b style="background:#666"></b><b style="background:#808080"></b><b style="background:#999"></b><b style="background:#b3b3b3"></b><b style="background:#ccc"></b><b style="background:#e6e6e6"></b><b style="background:#ececec"></b><b style="background:#f2f2f2"></b><b style="background:#f9f9f9"></b><b style="background:#fff"></b>
  <b style="background:#800000"></b><b style="background:#f00"></b><b style="background:#808000"></b><b style="background:#ff0"></b><b style="background:#008000"></b><b style="background:#0f0"></b><b style="background:#008080"></b><b style="background:#0ff"></b><b style="background:#000080"></b><b style="background:#00f"></b><b style="background:#800080"></b><b style="background:#f0f"></b>
  <b style="background:#2b0000"></b><b style="background:#500"></b><b style="background:#800000"></b><b style="background:#a00"></b><b style="background:#d40000"></b><b style="background:#f00"></b><b style="background:#ff2a2a"></b><b style="background:#f55"></b><b style="background:#ff8080"></b><b style="background:#faa"></b><b style="background:#ffd5d5"></b>
  <b style="background:#280b0b"></b><b style="background:#501616"></b><b style="background:#782121"></b><b style="background:#a02c2c"></b><b style="background:#c83737"></b><b style="background:#d35f5f"></b><b style="background:#de8787"></b><b style="background:#e9afaf"></b><b style="background:#f4d7d7"></b>
  <b style="background:#241c1c"></b><b style="background:#483737"></b><b style="background:#6c5353"></b><b style="background:#916f6f"></b><b style="background:#ac9393"></b><b style="background:#c8b7b7"></b><b style="background:#e3dbdb"></b>
  <b style="background:#2b1100"></b><b style="background:#520"></b><b style="background:#803300"></b><b style="background:#a40"></b><b style="background:#d45500"></b><b style="background:#f60"></b><b style="background:#ff7f2a"></b><b style="background:#f95"></b><b style="background:#ffb380"></b><b style="background:#fca"></b><b style="background:#ffe6d5"></b>
  <b style="background:#28170b"></b><b style="background:#502d16"></b><b style="background:#784421"></b><b style="background:#a05a2c"></b><b style="background:#c87137"></b><b style="background:#d38d5f"></b><b style="background:#deaa87"></b><b style="background:#e9c6af"></b><b style="background:#f4e3d7"></b>
  <b style="background:#241f1c"></b><b style="background:#483e37"></b><b style="background:#6c5d53"></b><b style="background:#917c6f"></b><b style="background:#ac9d93"></b>
  <svg class="pal-arrow" viewBox="0 0 8 12"><path d="M6 1v10L1 6z" fill="#444"/></svg>
</div>
<div class="palscroll"><div class="palthumb"></div></div>

<footer class="status">
  <div class="fs"><div class="fs-row"><span>Fill:</span><span>N/A</span></div><div class="fs-row"><span>Stroke:</span><span>N/A</span></div></div>
  <span class="op">O:</span>
  <div class="spin opspin"><span class="v">0</span><span class="st"><svg viewBox="0 0 10 16"><use href="#ud"/></svg></span></div>
  <i class="vs"></i>
  <svg class="eye" viewBox="0 0 16 14"><path d="M1 8q7-7 14 0q-7 6-14 0z" fill="#fff" stroke="#111"/><circle cx="8" cy="8" r="3" fill="#111"/><path d="M3 4l1 2M6 2v3M10 2v3M13 4l-1 2" stroke="#111"/></svg>
  <svg class="lk2"><use href="#lock"/></svg>
  <div class="layer"><span><i class="dot"></i>Layer 1</span><svg class="ud" viewBox="0 0 10 16"><use href="#ud"/></svg></div>
  <span class="msg">No objects selected. Click, Shift+click, Alt+scroll mouse on top of objects, or drag around objects to select.</span>
  <i class="vs vs2"></i>
  <div class="coords"><div><span>X:</span><span>-9.21</span></div><div><span>Y:</span><span>18.10</span></div></div>
  <span class="zl">Z:</span>
  <div class="zoomspin"><span class="zv">35%</span><span class="st"><svg viewBox="0 0 10 16"><use href="#ud"/></svg></span></div>
  <svg class="grip" viewBox="0 0 10 10"><path d="M9 1v8H1zM9 5v4H5z" fill="none" stroke="#aaa"/></svg>
</footer>

<i class="pageedge"></i>
<div class="dialog">
  <div class="dlg-title">
    <svg class="ic20"><use href="#ink"/></svg>
    <span class="dlg-name">DXF Input</span>
    <svg class="dbtn" viewBox="0 0 14 14"><rect x="3" y="3" width="8" height="8" fill="none" stroke="#fff" stroke-width="1.500"/></svg>
    <svg class="dbtn" viewBox="0 0 14 14"><path d="M3 3l8 8M11 3l-8 8" stroke="#fff" stroke-width="2"/></svg>
  </div>
  <div class="dlg-body">
    <div class="tabs"><span class="tab active">Options</span><span class="tab">Help</span></div>
    <div class="tabpage">
      <div class="row chk"><i class="cb"></i><span>Use automatic scaling to size A4</span></div>
      <div class="row r2"><span>Or, use manual scale factor:</span><div class="entry">25.4</div></div>
      <div class="row r2"><span>Manual x-axis origin (mm):</span><div class="entry">0.0</div></div>
      <div class="row r2"><span>Manual y-axis origin (mm):</span><div class="entry">0.0</div></div>
      <div class="row chk chk2"><i class="cb"></i><span>Gcodetools compatible point import</span></div>
      <div class="dashes">------------------------------------------------------------------------------------------------</div>
      <div class="row enc"><span>Character encoding:</span><div class="combo"><span>Latin 1</span><svg class="ud" viewBox="0 0 10 16"><use href="#ud"/></svg></div></div>
      <div class="row r3"><span>Text Font:</span><div class="entry">Arial</div></div>
    </div>
    <div class="dlg-sep"></div>
    <div class="dlg-actions">
      <span class="btn"><svg class="btn-ic" viewBox="0 0 22 22"><circle cx="11" cy="11" r="10.500" fill="#d8232a" stroke="#8c1a20"/><path d="M7 7l8 8M15 7l-8 8" stroke="#fff" stroke-width="2.800"/></svg>Cancel</span>
      <span class="btn ok"><svg class="btn-ic" viewBox="0 0 22 22"><path d="M1 12l4-2 4 5L18 1l3 1L10 21H7z" fill="#a8d050" stroke="#7a9a30" stroke-width=".6"/></svg>OK</span>
    </div>
  </div>
</div>
</body>
</html>
```

FILE: styles.css
```css
* { box-sizing: border-box; }
html, body { margin: 0; padding: 0; }
body {
  width: 1280px; height: 1024px; overflow: hidden; position: relative;
  display: flex; flex-direction: column;
  background: #cdcdcd; color: #404040;
  font: 12.600px "Noto Sans", "Open Sans", sans-serif;
}
i { display: block; font-style: normal; }
svg { display: block; flex: none; }
.sprite { position: absolute; width: 0; height: 0; }
.grow { flex: 1; }
.ic { width: 24px; height: 24px; }
.ic20 { width: 20px; height: 20px; }
.ic18 { width: 18px; height: 18px; }

/* top panel */
.panel { height: 26px; flex: none; background: #1e2125; border-bottom: 1px solid #43474b; display: flex; align-items: center; color: #b4b8bc; padding: 0 0 2px 3px; font-size: 12.800px; }
.kde { width: 20px; height: 20px; border-radius: 50%; background: #0c4fa8; display: flex; align-items: center; justify-content: center; flex: none; }
.kde-ic { width: 16px; height: 16px; }
.win-ic { width: 14px; height: 14px; margin-left: 16px; }
.task { margin-left: 3px; }
.task.first { margin-left: 7px; margin-right: 7px; width: 170px; }
.diamond { width: 24px; height: 18px; margin-right: 12px; }
.clock { color: #dfe2e4; }
.net { width: 18px; height: 20px; margin-left: 7px; }
.vol { width: 18px; height: 16px; margin-left: 7px; margin-right: 6px; }

/* title */
.titlebar { height: 18px; flex: none; display: flex; align-items: center; padding-left: 3px; position: relative; background: linear-gradient(#ececec, #d6d6d6); border-bottom: 1px solid #b8b8b8; }
.wintitle { position: absolute; left: 537px; top: 1px; font-weight: 700; font-size: 11.700px; color: #9c9c9c; }
.titlebar .ic18 { margin-right: auto; }
.wbtn { width: 23px; height: 17px; border-left: 1px solid #dedede; display: flex; align-items: center; justify-content: center; }
.wbtn svg { width: 12px; height: 12px; }

/* menu */
.menu { height: 23px; flex: none; display: flex; align-items: center; gap: 16.500px; padding: 0 0 3px 8px; background: #cdcdcd; }

/* toolbars */
.tb { flex: none; display: flex; align-items: center; padding-left: 1px; }
.tb1 { height: 34px; padding-bottom: 2px; background: linear-gradient(#d2d2d2, #bfbfbf); border-bottom: 1px solid #a4a4a4; }
.tb2 { height: 36px; background: linear-gradient(#d2d2d2, #c2c2c2); border-bottom: 1px solid #a4a4a4; }
.b { width: 34px; height: 30px; display: flex; align-items: center; justify-content: center; flex: none; }
.big-t { font: 700 30px/24px "Liberation Serif", serif; color: #111; }
.sep { width: 12px; height: 24px; position: relative; flex: none; }
.sep::after { content: ""; position: absolute; left: 6px; top: 0; bottom: 0; width: 1px; background: #b4b4b4; }
.lab { font-size: 11px; color: #a8a8a8; width: 14px; flex: none; }
.lab-x { margin-left: 8px; margin-right: 1px; }
.lab-y { margin-left: 9px; margin-right: 1px; }
.lab-w { margin-left: 9px; margin-right: 4px; }
.lab-h { margin-left: 17px; margin-right: 3px; }
.spin { width: 58px; height: 20px; display: flex; border: 1px solid #a6a6a6; border-radius: 3px; background: #d0d0d0; flex: none; font-size: 12px; color: #999; }
.spin .v { flex: 1; padding-left: 3px; line-height: 18px; }
.st { width: 12px; border-left: 1px solid #b0b0b0; display: flex; align-items: center; justify-content: center; opacity: .45; flex: none; }
.st svg { width: 8px; height: 14px; }
.lk { width: 14px; height: 14px; margin-left: 11px; margin-right: 0; }
.unit { width: 47px; height: 22px; margin-left: 2px; border: 1px solid #a8a8a8; border-radius: 3px; display: flex; align-items: center; justify-content: space-between; padding: 0 5px; font-size: 12px; flex: none; background: linear-gradient(#d6d6d6, #c4c4c4); }
.ud { width: 8px; height: 14px; }
.sep2 { margin-left: 1px; width: 13px; }
.modes { display: flex; gap: 2px; }
.mode { width: 32px; height: 32px; background: #aaaaaa; border: 1px solid #8a8a8a; border-radius: 3px; display: flex; align-items: center; justify-content: center; }
.mode-ic { width: 16px; height: 16px; }

/* main */
.main { flex: 1; min-height: 0; display: flex; }
.tools { width: 33px; flex: none; display: flex; flex-direction: column; padding: 2px 0 0 0; align-items: flex-start; }
.tool { width: 33px; height: 31.400px; display: flex; align-items: center; justify-content: center; flex: none; }
.tool.on { width: 29px; height: 30px; margin-left: 3px; margin-bottom: 1.400px; background: #aeaeae; border: 1px solid #909090; border-radius: 3px; }
.big-a { font: 700 29px/24px "Liberation Sans", sans-serif; color: #1c1c1c; }

.desk { width: 967px; flex: none; display: grid; grid-template-columns: 17px 925px 25px; grid-template-rows: 15px 788px 21px; }
.corner { position: relative; }
.corner::after { content: ""; position: absolute; right: 0; bottom: -6px; width: 5px; height: 5px; background: #333; }
.hruler { display: flex; padding-left: 8px; position: relative; font-size: 10px; color: #60607a; line-height: 13px;
  border-bottom: 1px solid #222;
  background-image:
  repeating-linear-gradient(90deg, #333 0 1px, transparent 1px 31.500px),
  repeating-linear-gradient(90deg, #333 0 1px, transparent 1px 7.875px);
  background-repeat: no-repeat;
  background-size: 100% 5px, 100% 2.500px;
  background-position: 8px 9px, 8px 11.500px; }
.hruler span { width: 63px; flex: none; height: 14px; border-left: 1px solid #333; padding-left: 2px; }
.pointer { position: absolute; left: 153px; top: 9px; border: 4px solid transparent; border-top: 5px solid #222; border-bottom: 0; }
.badge-cell { padding: 5px 0 0 3px; }
.badge { display: block; width: 14px; height: 14px; background: #444; color: #fff; border-radius: 3px; font-size: 10px; font-weight: 700; line-height: 14px; text-align: center; }
.vruler { display: flex; flex-direction: column; padding-top: 5px; position: relative; overflow: hidden; font-size: 10px; color: #60607a; line-height: 9px; border-right: 1px solid #222;
  background-image:
  repeating-linear-gradient(180deg, #333 0 1px, transparent 1px 31.500px),
  repeating-linear-gradient(180deg, #333 0 1px, transparent 1px 7.875px);
  background-repeat: no-repeat;
  background-size: 5px 100%, 2.500px 100%;
  background-position: 11px 5px, 13.500px 5px;
}
.vruler span { height: 63px; flex: none; border-top: 1px solid #333; padding: 2px 0 0 4px; }
.canvas { background: #fff; border-right: 2px solid #cdcdcd; }
.vscroll { padding: 9px 8px 0 2px; }
.vtrack { height: 779px; width: 15px; border-radius: 7px 7px 0 0; background: linear-gradient(90deg, #e4e4e4, #f6f6f6 50%, #e8e8e8); padding-top: 125px; display: flex; justify-content: center; }
.vthumb { width: 9px; height: 522px; border: 1px solid #8c8c8c; background: #cdcdcd; border-radius: 5px; }
.hscroll { padding: 3px 3px 0 0; }
.htrack { height: 14px; border-radius: 7px; background: linear-gradient(#fbfbfb, #efefef); padding: 2px 3px; }
.hthumb { height: 9px; background: #cdcdcd; border: 1px solid #8c8c8c; border-radius: 5px; }
.sc-corner { padding: 4px 0 0 3px; }
.sc-ic { width: 12px; height: 14px; }

/* dock */
.dock { width: 248px; flex: none; display: flex; flex-direction: column; border-left: 1px solid #b4b4b4; padding-left: 6px; padding-right: 4px; position: relative; }
.dock-head { height: 28px; display: flex; align-items: center; padding-top: 4px; gap: 11px; font-size: 12.600px; }
.dk { width: 11px; height: 11px; }
.dock-head .dk:last-child { margin-right: 6px; }
.fx { width: 236px; height: 162px; border: 1px solid #bcbcbc; padding: 5px 5px 5px 4px; display: flex; flex-direction: column; }
.fx-list { width: 226px; height: 70px; border: 1px solid #b0b0b0; flex: none; }
.fx-btns { display: flex; align-items: center; height: 32px; padding: 0 10px; }
.fb { width: 20px; height: 20px; }
.minus { margin-left: 19px; }
.up { margin-right: 19px; }
.fx-msg { margin: 3px 0 0; text-align: center; }
.fx-handle { text-align: center; font-size: 7px; color: #888; line-height: 12px; }
.dock-grip { position: absolute; left: -4px; top: 408px; width: 3px; height: 8px; border-left: 1px dotted #999; border-right: 1px dotted #999; }

/* snap bar */
.snap { width: 32px; flex: none; display: flex; flex-direction: column; align-items: center; border-left: 1px solid #b4b4b4; padding-top: 1px; }
.sn { width: 26px; height: 28px; display: flex; align-items: center; justify-content: center; flex: none; position: relative; }
.sn .ic { width: 22px; height: 22px; }
.sn.on { background: #aeaeae; border: 1px solid #8e8e8e; border-radius: 3px; height: 27px; margin-bottom: 1px; }
.snap-a { font: 900 22px/22px "Liberation Sans", sans-serif; color: #111; }
.sn .snap-mark { position: absolute; left: 2px; top: 3px; }
.snsep { width: 18px; height: 12px; flex: none; position: relative; }
.snsep::after { content: ""; position: absolute; left: 0; right: 0; top: 6px; height: 1px; background: #dcdcdc; }

/* palette */
.palette { height: 21px; flex: none; display: flex; align-items: stretch; padding: 2px 15.500px 2px 3px; border-top: 1px solid #dedede; border-bottom: 1px solid #b8b8b8; position: relative; }
.palette b { flex: 1; min-width: 0; }
.none { flex: 1; min-width: 0; display: block; }
.none svg { width: 100%; height: 100%; }
.pal-arrow { position: absolute; right: 3px; top: 1px; width: 8px; height: 12px; }
.palscroll { height: 15px; flex: none; margin-right: 12px; padding: 3px 0 0 3px; background: linear-gradient(#ffffff, #f0f0f0); }
.palthumb { width: 229px; height: 9px; border: 1px solid #8c8c8c; border-radius: 5px; background: #cdcdcd; }

/* status */
.status { height: 27px; flex: none; display: flex; align-items: center; padding-left: 2px; }
.fs { width: 117px; font-size: 11px; line-height: 13px; flex: none; padding-bottom: 1px; }
.fs-row { display: flex; }
.fs-row span:first-child { width: 70px; }
.op { font-size: 11px; margin-left: 8px; width: 14px; }
.opspin { width: 46px; height: 20px; }
.vs { width: 1px; height: 24px; background: #b8b8b8; margin: 0 4px 0 4px; flex: none; }
.eye { width: 16px; height: 14px; }
.lk2 { width: 14px; height: 14px; margin-left: 7px; }
.layer { width: 77px; height: 23px; margin-left: 6px; border: 1px solid #a8a8a8; border-radius: 3px; display: flex; align-items: center; justify-content: space-between; padding: 0 5px 0 4px; font-size: 11px; font-weight: 700; background: linear-gradient(#d6d6d6, #c4c4c4); flex: none; }
.dot { display: inline-block; width: 3px; height: 3px; background: #333; margin: 0 2px 2px 0; }
.msg { margin-left: 7px; flex: 1; white-space: nowrap; }
.vs2 { margin: 0 1px 0 0; }
.coords { width: 60px; line-height: 13px; flex: none; font-family: "DejaVu Sans Mono", "Noto Sans", monospace; font-size: 10.500px; }
.coords div { display: flex; justify-content: space-between; padding-right: 7px; }
.zl { font-size: 11px; margin-left: 2px; width: 12px; }
.zoomspin { width: 55px; height: 20px; display: flex; border: 1px solid #a0a0a0; border-radius: 3px; background: #fff; font-size: 12px; flex: none; }
.zv { flex: 1; text-align: center; line-height: 18px; }
.zoomspin .st { opacity: 1; background: #d0d0d0; }
.grip { width: 10px; height: 10px; margin: 10px 0 0 10px; }

/* page edge peeking under dialog */
.pageedge { position: absolute; left: 500px; top: 725px; width: 270px; height: 2px; background: #223a55; }

/* dialog */
.dialog { position: absolute; left: 453px; top: 365px; width: 384px; height: 361px; border: 1px solid #1f63a8; border-radius: 2px; box-shadow: 0 0 7px rgba(0,0,0,.45); background: #cdcdcd; display: flex; flex-direction: column; }
.dlg-title { height: 18px; flex: none; display: flex; align-items: center; padding: 0 10px 0 7px; background: linear-gradient(#7fb8ea, #3f8fdc); color: #fff; }
.dlg-name { flex: 1; text-align: center; font-weight: 700; font-size: 12px; padding-left: 6px; }
.dbtn { width: 14px; height: 14px; margin-left: 9px; }
.dlg-body { flex: 1; padding: 10px 12px 0 12px; display: flex; flex-direction: column; }
.tabs { display: flex; align-items: flex-end; height: 29px; gap: 3px; flex: none; }
.tab { height: 26px; padding: 5px 6px 0; border: 1px solid #bcbcbc; border-bottom: 0; border-radius: 3px 3px 0 0; color: #606060; background: #c4c4c4; }
.tab.active { height: 30px; padding: 6px 6px 0; background: #d2d2d2; color: #404040; margin-bottom: -1px; position: relative; z-index: 1; }
.tabpage { height: 244px; flex: none; border: 1px solid #b8b8b8; border-radius: 2px; background: #d0d0d0; padding: 6px 8px 0 7px; display: flex; flex-direction: column; }
.row { display: flex; align-items: center; gap: 6px; flex: none; }
.chk { height: 26px; padding-left: 4px; gap: 8px; }
.chk2 { margin-top: -1px; }
.cb { width: 13px; height: 13px; background: #fff; border: 1px solid #8c8c8c; border-radius: 2px; flex: none; }
.r2 { height: 31px; }
.r3 { height: 32px; gap: 5px; }
.entry { flex: 1; height: 25px; background: #fff; border: 1px solid #a0a0a0; border-radius: 2px; color: #222; padding-left: 3px; line-height: 23px; font-size: 13px; }
.r3 { gap: 7px; }
.dashes { height: 22px; padding-left: 12px; font-size: 9px; line-height: 22px; white-space: nowrap; overflow: hidden; color: #333; flex: none; letter-spacing: .14px; }
.enc { height: 31px; }
.combo { flex: 1; height: 27px; border: 1px solid #a0a0a0; border-radius: 2px; display: flex; align-items: center; justify-content: space-between; padding: 0 6px 0 4px; background: linear-gradient(#d2d2d2, #bebebe); }
.dlg-sep { height: 1px; background: #dcdcdc; margin: 9px -6px 0; flex: none; }
.dlg-actions { display: flex; justify-content: flex-end; gap: 8px; padding-top: 6px; }
.btn { width: 83px; height: 30px; border: 1px solid #a0a0a0; border-radius: 2px; background: linear-gradient(#d8d8d8, #c4c4c4); display: flex; align-items: center; justify-content: center; gap: 2px; }
.btn.ok { background: #5f9bdb; border-color: #4c86c2; color: #3a3a3a; gap: 3px; }
.btn-ic { width: 22px; height: 22px; }
```
